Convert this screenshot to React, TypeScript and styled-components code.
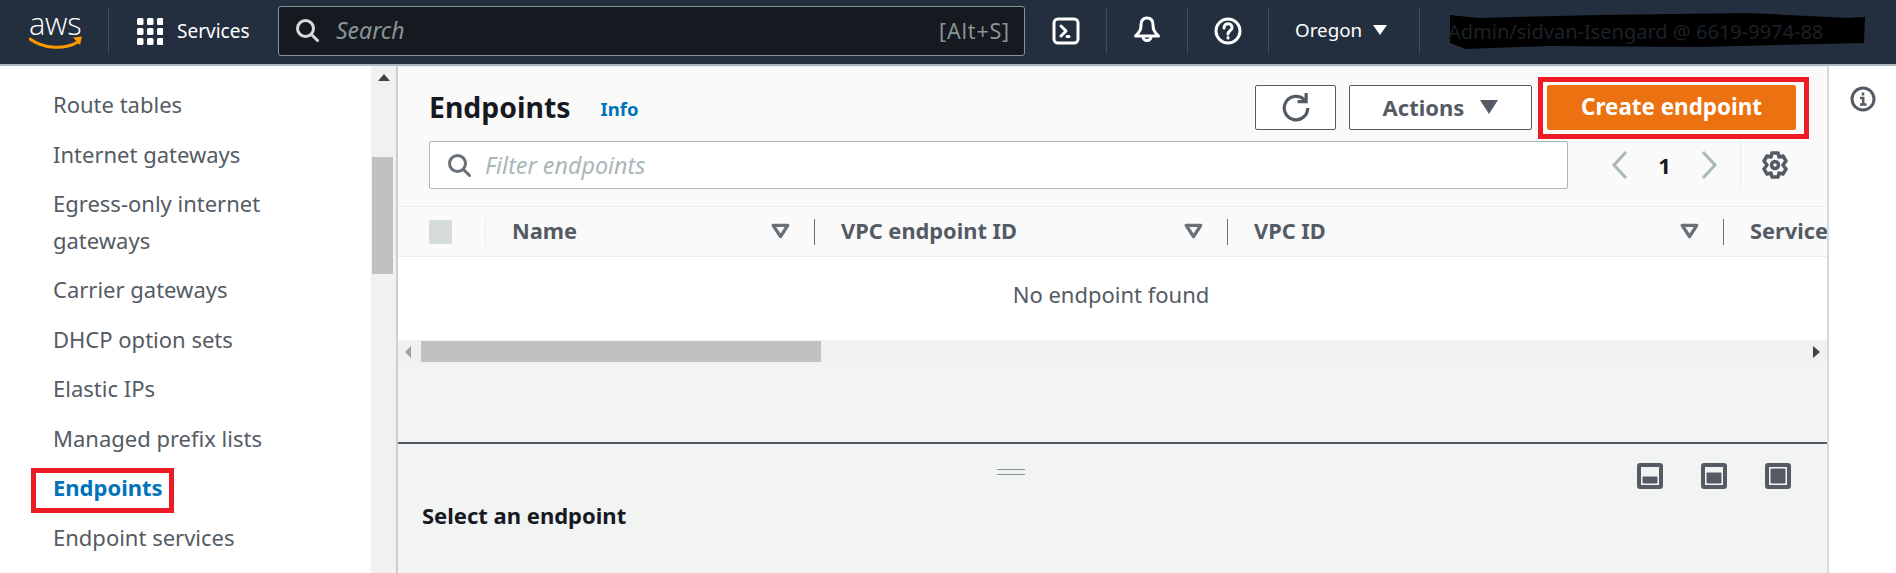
import React from "react";
import styled, { createGlobalStyle } from "styled-components";

const Global = createGlobalStyle`
  html, body { margin: 0; padding: 0; background: #fff; }
  * { box-sizing: border-box; }
  body { font-family: "Noto Sans", "Open Sans", sans-serif; overflow: hidden; }
`;

const Page = styled.div`
  width: 1896px; height: 573px; display: flex; flex-direction: column; overflow: hidden;
`;
const Header = styled.header`
  height: 66px; flex: none; background: #232f3e; border-bottom: 2px solid #aeb6bd;
  display: flex; align-items: center; color: #fff; padding-bottom: 2px;
`;
const Logo = styled.div`
  width: 79px; height: 46px; flex: none; margin-left: 29px; position: relative;
  display: flex; flex-direction: column; align-items: flex-start;
`;
const LogoText = styled.span`
  font-family: "Open Sans", sans-serif; font-size: 31px; font-weight: 300; line-height: 30px;
  letter-spacing: -0.3px; margin-left: 0;
`;
const Smile = styled.svg`
  position: absolute; left: 0; top: 26px;
`;
const Divider = styled.span`
  width: 1px; height: 46px; background: #414d5c; flex: none;
`;
const ServicesBtn = styled.div`
  display: flex; align-items: center; gap: 14px; margin-left: 28px; width: 141px; flex: none;
  font-size: 19px; padding-bottom: 1px;
`;
const SearchBox = styled.div`
  width: 747px; height: 50px; flex: none; background: #16191f; border: 1px solid #879596; border-radius: 3px;
  display: flex; align-items: center; padding: 0 14px 2px 16px; gap: 17px;
`;
const SearchPlaceholder = styled.span`
  font-style: italic; font-size: 23px; color: #879596; flex: 1;
`;
const Shortcut = styled.span`
  font-size: 21.5px; color: #879596; letter-spacing: 0.8px;
`;
const IconCell = styled.div<{ $w: number }>`
  width: ${(p) => p.$w}px; flex: none; display: flex; justify-content: center; align-items: center;
`;
const Region = styled.div`
  width: 150px; flex: none; display: flex; align-items: center; gap: 11px; padding: 0 0 2px 26px; font-size: 18.8px;
`;
const Caret = styled.svg`
  flex: none;
`;
const Account = styled.div`
  position: relative; margin-left: 28px; width: 418px; height: 44px; display: flex; align-items: center;
  font-size: 20px; color: #1b2126; white-space: nowrap; overflow: hidden;
`;
const Scribble = styled.svg`
  position: absolute; inset: 0;
`;
const AccountText = styled.span`
  position: relative;
`;

const Body = styled.div`
  flex: 1; display: flex; min-height: 0;
`;
const Sidebar = styled.nav`
  width: 371px; flex: none; padding: 20px 0 0 53px; display: flex; flex-direction: column; gap: 13px; background: #fff;
`;
const NavItem = styled.a<{ $active?: boolean }>`
  position: relative; font-size: 22px; line-height: 36.5px; color: ${(p) => (p.$active ? "#0073bb" : "#545b64")};
  font-weight: ${(p) => (p.$active ? 700 : 400)}; width: 270px;
`;
const RedBox = styled.span`
  position: absolute; border: 5px solid #ed1c24; pointer-events: none;
`;
const NavRed = styled(RedBox)`
  left: -22px; top: -1px; width: 143px; height: 45px;
`;
const VScroll = styled.div`
  width: 25px; flex: none; background: #f1f1f1; display: flex; flex-direction: column; align-items: center;
`;
const VThumb = styled.div`
  width: 21px; height: 117px; background: #c1c1c1; margin-top: 74px; margin-left: -2px;
`;
const Main = styled.main`
  width: 1432px; flex: none; border-left: 2px solid #c9cfd3; background: #f2f3f3; display: flex; flex-direction: column;
`;
const TopPanel = styled.section`
  height: 140px; flex: none; background: #fafafa; padding: 18px 31px 0 31px; display: flex; flex-direction: column;
  border-top: 1px solid #eaeded;
`;
const TitleRow = styled.div`
  display: flex; align-items: center; height: 45px;
`;
const Title = styled.h1`
  margin: -2px 0 0; font-size: 28.4px; font-weight: 700; color: #16191f; line-height: 44px;
`;
const Info = styled.a`
  margin-left: 30px; margin-top: 2px; font-size: 18.5px; font-weight: 700; color: #0073bb;
`;
const Actions = styled.div`
  margin-left: auto; display: flex; align-items: center; position: relative; margin-right: -1px;
`;
const Button = styled.button`
  height: 45px; border: 1px solid #545b64; border-radius: 2px; background: #fff; color: #545b64;
  font-family: inherit; font-size: 22px; font-weight: 700; display: flex; align-items: center; justify-content: center;
  padding: 0 0 2px;
`;
const RefreshBtn = styled(Button)`
  width: 81px; padding: 0;
`;
const ActionsBtn = styled(Button)`
  width: 183px; margin-left: 13px; gap: 16px;
`;
const PrimaryBtn = styled(Button)`
  width: 249px; margin-left: 15px; margin-right: 2px; background: #ec7211; border-color: #ec7211; color: #fff;
  position: relative; font-size: 22.4px;
`;
const ButtonRed = styled(RedBox)`
  left: -10px; top: -9px; width: 271px; height: 62px;
`;
const FilterRow = styled.div`
  display: flex; align-items: center; margin-top: 11px;
`;
const FilterInput = styled.div`
  width: 1139px; height: 48px; background: #fff; border: 1px solid #aab7b8; border-radius: 2px;
  display: flex; align-items: center; padding-left: 17px; gap: 14px; flex: none;
`;
const FilterPlaceholder = styled.span`
  font-style: italic; font-size: 23.3px; color: #aab7b8; padding-bottom: 1px;
`;
const Pager = styled.div`
  display: flex; align-items: center; margin-left: 43px; height: 48px;
`;
const PageNum = styled.span`
  font-size: 22px; font-weight: 700; color: #16191f; width: 71px; text-align: center;
`;
const PagerDivider = styled.span`
  width: 1px; height: 48px; background: #eaeded; margin: 0 20px 0 22px;
`;
const TableHead = styled.div`
  height: 51px; flex: none; background: #fafafa; border-top: 1px solid #eaeded; border-bottom: 1px solid #eaeded;
  display: grid; grid-template-columns: 87px 329px 413px 496px 1fr; align-items: center; overflow: hidden;
`;
const CheckCell = styled.div`
  padding-left: 31px; height: 26px; display: flex; align-items: center;
`;
const Check = styled.span`
  width: 23px; height: 24px; border-radius: 2px; background: #d5dbdb;
`;
const HeadCell = styled.div<{ $soft?: boolean }>`
  height: 26px; border-left: 1px solid ${(p) => (p.$soft ? "#eaeded" : "#687078")}; padding: 0 24px 2px 26px;
  display: flex; align-items: center; justify-content: space-between; gap: 8px;
  font-size: 21.8px; font-weight: 700; color: #545b64; white-space: nowrap;
`;
const EmptyRow = styled.div`
  height: 83px; flex: none; background: #fff; display: flex; align-items: center; justify-content: center;
  font-size: 22px; color: #545b64; padding: 0 4px 10px 0;
`;
const HScroll = styled.div`
  height: 23px; flex: none; background: #f1f1f1; display: flex; align-items: center; padding: 0 8px 0 7px;
`;
const HThumb = styled.div`
  width: 400px; height: 21px; background: #c1c1c1; margin-left: 9px; margin-right: auto;
`;
const Gap = styled.div`
  height: 81px; flex: none; border-bottom: 2px solid #545b64;
`;
const SplitPane = styled.section`
  flex: 1; padding: 19px 37px 0 24px; display: flex; flex-direction: column; position: relative;
`;
const SplitTop = styled.div`
  display: flex; align-items: center; justify-content: flex-end; gap: 38px;
`;
const Handle = styled.span`
  position: absolute; left: 599px; top: 25px; width: 28px; height: 6px; border-top: 1.5px solid #879596; border-bottom: 1.5px solid #879596;
`;
const PaneTitle = styled.h2`
  margin: 12px 0 0; font-size: 22px; font-weight: 700; color: #16191f; line-height: 28px;
`;
const Rail = styled.aside`
  flex: 1; background: #fff; border-left: 2px solid #d5dbdb; display: flex; justify-content: center; padding-top: 20px; margin-left: -1px;
`;

const Stroke = { fill: "none", strokeLinecap: "round" as const, strokeLinejoin: "round" as const };

const SearchIcon = ({ c, s = 24 }: { c: string; s?: number }) => (
  <svg width={s} height={s} viewBox="0 0 24 24" {...Stroke} stroke={c} strokeWidth="3">
    <circle cx="10.5" cy="10.5" r="8" />
    <path d="M16.5 16.5 22.5 22.5" />
  </svg>
);

const FilterTri = () => (
  <svg width="19" height="16" viewBox="0 0 17 14">
    <path d="M2 2h13L8.5 12Z" fill="none" stroke="#687078" strokeWidth="3" strokeLinejoin="round" />
  </svg>
);

const PaneIcon = ({ h }: { h: number }) => (
  <svg width="26" height="26" viewBox="0 0 26 26">
    <rect x="2" y="2" width="22" height="22" rx="1" fill="none" stroke="#545b64" strokeWidth="4" />
    <rect x="5.5" y={20.5 - h} width="15" height={h} rx="1" fill="#545b64" />
  </svg>
);

const names = ["Route tables", "Internet gateways", "Egress-only internet gateways", "Carrier gateways", "DHCP option sets", "Elastic IPs", "Managed prefix lists"];

export default function App() {
  return (
    <Page>
      <Global />
      <Header>
        <Logo>
          <LogoText>aws</LogoText>
          <Smile width="54" height="20" viewBox="0 0 54 20">
            <path d="M1 5c14 10 34 11 48 3" fill="none" stroke="#ff9900" strokeWidth="3" strokeLinecap="round" />
            <path d="M44 3.5 53 2.5 51 11Z" fill="#ff9900" />
          </Smile>
        </Logo>
        <Divider />
        <ServicesBtn>
          <svg width="26" height="32" viewBox="0 0 26 32" fill="#fff">
            {[0, 10, 20].flatMap((y) => [0, 10, 20].map((x) => <rect key={`${x}${y}`} x={x} y={y + 3} width="6.5" height="7" rx="1.5" />))}
          </svg>
          Services
        </ServicesBtn>
        <SearchBox>
          <SearchIcon c="#d5dbdb" />
          <SearchPlaceholder>Search</SearchPlaceholder>
          <Shortcut>[Alt+S]</Shortcut>
        </SearchBox>
        <IconCell $w={81}>
          <svg width="28" height="28" viewBox="0 0 28 28" fill="none" stroke="#fff" strokeWidth="3" strokeLinejoin="round" strokeLinecap="round">
            <rect x="2" y="2" width="24" height="24" rx="4" />
            <path d="M9 9l5 5-5 5M15 19.5h2" />
          </svg>
        </IconCell>
        <Divider />
        <IconCell $w={80}>
          <svg width="28" height="30" viewBox="0 0 28 30" fill="none" stroke="#fff" strokeWidth="3" strokeLinejoin="round">
            <path d="M14 2c-4.500 0-6 3.500-6 7 0 5-1.500 7-5.500 11h23c-4-4-5.500-6-5.500-11 0-3.500-1.500-7-6-7Z" />
            <path d="M10 20.500a4 4 0 0 0 8 0" />
          </svg>
        </IconCell>
        <Divider />
        <IconCell $w={80}>
          <svg width="28" height="28" viewBox="0 0 28 28" fill="none" stroke="#fff" strokeWidth="3" strokeLinecap="round">
            <circle cx="14" cy="14" r="12" />
            <path d="M10 11c0-6 8.500-5.500 8 0-.3 2.500-4 3-4 6" />
            <path d="M14 20.500v.5" />
          </svg>
        </IconCell>
        <Divider />
        <Region>
          Oregon
          <Caret width="14" height="12" viewBox="0 0 14 12"><path d="M0 1h14L7 11Z" fill="#fff" /></Caret>
        </Region>
        <Divider />
        <Account>
          <Scribble width="418" height="44" viewBox="0 0 418 44">
            <path d="M2 6 30 9 150 6 300 4 400 9 417 8 416 34 250 38 100 37 18 40 2 34Z" fill="#000" />
          </Scribble>
          <AccountText>Admin/sidvan-Isengard @ 6619-9974-88</AccountText>
        </Account>
      </Header>
      <Body>
        <Sidebar>
          {names.map((n) => <NavItem key={n}>{n}</NavItem>)}
          <NavItem $active>Endpoints<NavRed /></NavItem>
          <NavItem>Endpoint services</NavItem>
        </Sidebar>
        <VScroll>
          <svg width="14" height="10" viewBox="0 0 14 10" style={{ marginTop: 7, flex: "none" }}><path d="M7 1 13 8H1Z" fill="#424242" /></svg>
          <VThumb />
        </VScroll>
        <Main>
          <TopPanel>
            <TitleRow>
              <Title>Endpoints</Title>
              <Info>Info</Info>
              <Actions>
                <RefreshBtn aria-label="Refresh">
                  <svg width="30" height="32" viewBox="0 0 28 30" fill="none" stroke="#545b64" strokeWidth="3">
                    <path d="M22 7.500A11 11 0 1 0 25 15" />
                    <path d="M23.500 1v8h-8" />
                  </svg>
                </RefreshBtn>
                <ActionsBtn>
                  Actions
                  <svg width="18" height="14" viewBox="0 0 18 14"><path d="M0 0h18L9 14Z" fill="#545b64" /></svg>
                </ActionsBtn>
                <PrimaryBtn>Create endpoint<ButtonRed /></PrimaryBtn>
              </Actions>
            </TitleRow>
            <FilterRow>
              <FilterInput>
                <SearchIcon c="#687078" />
                <FilterPlaceholder>Filter endpoints</FilterPlaceholder>
              </FilterInput>
              <Pager>
                <svg width="18" height="30" viewBox="0 0 18 30" fill="none" stroke="#aab7b8" strokeWidth="3"><path d="M15 2 3 15l12 13" /></svg>
                <PageNum>1</PageNum>
                <svg width="18" height="30" viewBox="0 0 18 30" fill="none" stroke="#aab7b8" strokeWidth="3"><path d="m3 2 12 13L3 28" /></svg>
                <PagerDivider />
                <svg width="28" height="28" viewBox="0 0 28 28" fill="none" stroke="#545b64" strokeWidth="3.500" strokeLinejoin="round">
                  <path d="M11 2h6l1 4 4-1 3 5-3 4 3 4-3 5-4-1-1 4h-6l-1-4-4 1-3-5 3-4-3-4 3-5 4 1Z" />
                  <circle cx="14" cy="14" r="3.500" />
                </svg>
              </Pager>
            </FilterRow>
          </TopPanel>
          <TableHead>
            <CheckCell><Check /></CheckCell>
            <HeadCell $soft>Name<FilterTri /></HeadCell>
            <HeadCell>VPC endpoint ID<FilterTri /></HeadCell>
            <HeadCell>VPC ID<FilterTri /></HeadCell>
            <HeadCell>Service</HeadCell>
          </TableHead>
          <EmptyRow>No endpoint found</EmptyRow>
          <HScroll>
            <svg width="7" height="12" viewBox="0 0 7 12"><path d="M6 0v12L0 6Z" fill="#a0a0a0" /></svg>
            <HThumb />
            <svg width="7" height="12" viewBox="0 0 7 12"><path d="M0 0v12l7-6Z" fill="#424242" /></svg>
          </HScroll>
          <Gap />
          <SplitPane>
            <Handle />
            <SplitTop>
              <PaneIcon h={7} />
              <PaneIcon h={11} />
              <PaneIcon h={15} />
            </SplitTop>
            <PaneTitle>Select an endpoint</PaneTitle>
          </SplitPane>
        </Main>
        <Rail>
          <svg width="26" height="26" viewBox="0 0 26 26" fill="none" stroke="#545b64" strokeWidth="3">
            <circle cx="13" cy="13" r="11" />
            <path d="M13 6.500v3M10 12h3.200v6M10 18.500h6.500" strokeWidth="2.500" />
          </svg>
        </Rail>
      </Body>
    </Page>
  );
}
